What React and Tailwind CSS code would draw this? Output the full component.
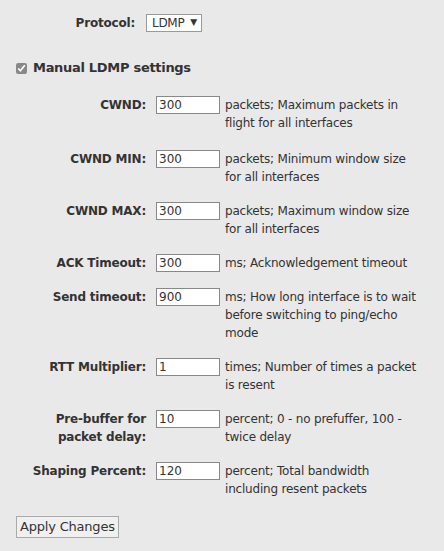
import React, { useState } from 'react';

const rows = [
    { label: 'CWND:', value: '300', help: 'packets; Maximum packets in flight for all interfaces' },
    { label: 'CWND MIN:', value: '300', help: 'packets; Minimum window size for all interfaces' },
    { label: 'CWND MAX:', value: '300', help: 'packets; Maximum window size for all interfaces' },
    { label: 'ACK Timeout:', value: '300', help: 'ms; Acknowledgement timeout' },
    { label: 'Send timeout:', value: '900', help: 'ms; How long interface is to wait before switching to ping/echo mode' },
    { label: 'RTT Multiplier:', value: '1', help: 'times; Number of times a packet is resent' },
    { label: 'Pre-buffer for packet delay:', value: '10', help: 'percent; 0 - no prefuffer, 100 - twice delay' },
    { label: 'Shaping Percent:', value: '120', help: 'percent; Total bandwidth including resent packets' },
];

export default function App() {
    const [manual, setManual] = useState(true);

    return (
        <div className="min-h-screen bg-[#e9e9e9] text-[#333] text-[12px] font-['DejaVu_Sans',sans-serif] pl-4 pt-[14px]">
            {/* protocol picker */}
            <div className="flex items-center h-[18px]">
                <div className="w-[130px] text-right font-bold pr-[11px] tracking-[-0.2px]">Protocol:</div>
                <div className="flex items-center h-[18px] w-[56px] bg-white border border-[#999] pl-[5px] text-[12px] tracking-[-0.3px]">
                    LDMP <span className="ml-[6px] text-[9px]">▼</span>
                </div>
            </div>

            <div className="flex items-center mt-[28px] h-[16px]">
                <input type="checkbox" checked={manual} onChange={e => setManual(e.target.checked)}
                    className="w-[11px] h-[11px] m-0 accent-[#888]" />
                <span className="ml-[6px] font-bold text-[13px] tracking-[-0.3px]">Manual LDMP settings</span>
            </div>

            <table className="mt-[20px] border-collapse">
                <tbody>
                    {rows.map((row, i) => {
                        const pad = i === 0 ? 'pb-[18px]' : 'pb-[16px]'
                        return (
                            <tr key={row.label}>
                                <td className={pad + ' w-[140px] pr-[10px] text-right align-top font-bold leading-[18px] tracking-[-0.2px]'}>{row.label}</td>
                                <td className={pad + ' w-[69px] align-top'}>
                                    <input type="text" defaultValue={row.value}
                                        className="block w-[64px] h-[18px] bg-white border border-[#888] px-[2px] text-[12px] leading-[16px] outline-none" />
                                </td>
                                <td className={pad + ' w-[196px] align-top leading-[18px] tracking-[-0.2px]'}>{row.help}</td>
                            </tr>
                        )
                    })}
                </tbody>
            </table>

            <button className="block mt-[2px] h-[22px] px-[3px] bg-[#f0f0f0] border border-[#aaa] text-[13px] text-[#333] tracking-[-0.2px]">Apply Changes</button>
        </div>
    );
}
